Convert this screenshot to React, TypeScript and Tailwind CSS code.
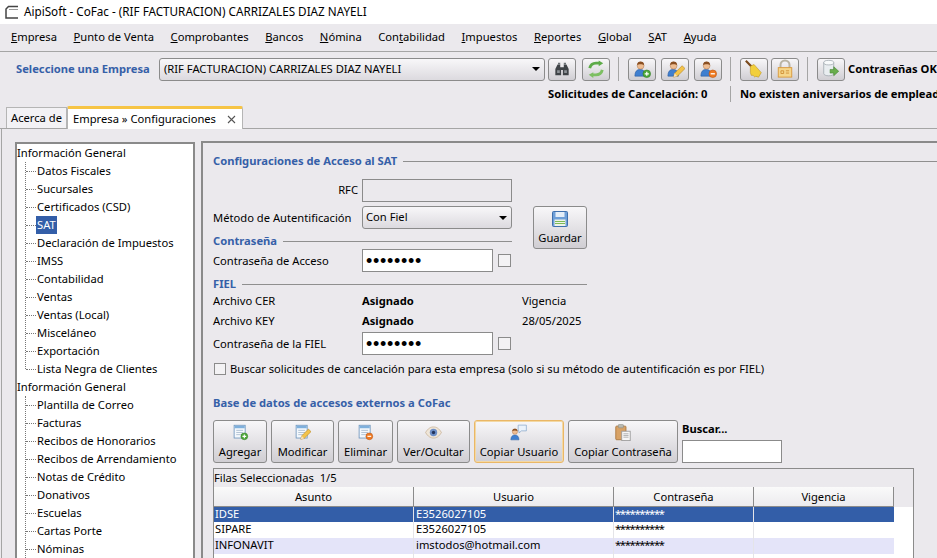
import type { ReactNode } from "react";

const menus: [string, number][] = [
	["Empresa", 0],
	["Punto de Venta", 0],
	["Comprobantes", 0],
	["Bancos", 0],
	["Nómina", 0],
	["Contabilidad", 3],
	["Impuestos", 0],
	["Reportes", 0],
	["Global", 0],
	["SAT", 0],
	["Ayuda", 0],
];

const treeA = ["Datos Fiscales", "Sucursales", "Certificados (CSD)", "SAT", "Declaración de Impuestos", "IMSS", "Contabilidad", "Ventas", "Ventas (Local)", "Misceláneo", "Exportación", "Lista Negra de Clientes"];
const treeB = ["Plantilla de Correo", "Facturas", "Recibos de Honorarios", "Recibos de Arrendamiento", "Notas de Crédito", "Donativos", "Escuelas", "Cartas Porte", "Nóminas"];

const rows = [
	{ asunto: "IDSE", usuario: "E3526027105", h: "h-[15px]", bg: "bg-[#335ea8] text-white" },
	{ asunto: "SIPARE", usuario: "E3526027105", h: "h-[16px]", bg: "bg-white text-black" },
	{ asunto: "INFONAVIT", usuario: "imstodos@hotmail.com", h: "h-[16px]", bg: "bg-[#e4e4f9] text-black" },
];

// small toolbar icons, drawn by hand
function Person({ children }: { children?: ReactNode }) {
	return (
		<svg width="19" height="19" viewBox="0 0 20 20">
			<path d="M2 17c0-5 2-7 5.500-7s5.500 2 5.500 7z" fill="#3f7fd0" stroke="#2a5a9c" strokeWidth=".6" />
			<circle cx="8" cy="6" r="3.600" fill="#eebd92" stroke="#a8704a" strokeWidth=".5" />
			<path d="M4.300 5.500C4.300 2.500 6 1.500 8 1.500s3.700 1 3.700 4C10 4 6 4 4.300 5.500z" fill="#8a4f22" />
			{children}
		</svg>
	);
}

const Plus = () => (
	<g>
		<circle cx="14.500" cy="14.500" r="4" fill="#4ea83a" stroke="#2f7a22" strokeWidth=".6" />
		<path d="M12.300 14.500h4.400M14.500 12.300v4.400" stroke="#fff" strokeWidth="1.300" />
	</g>
);

const Minus = () => (
	<g>
		<circle cx="14.500" cy="14.500" r="4" fill="#ee7a22" stroke="#b8500f" strokeWidth=".6" />
		<path d="M12.300 14.500h4.400" stroke="#fff" strokeWidth="1.400" />
	</g>
);

const Pencil = () => (
	<g>
		<path d="M8 18l1-4 8-8 3 3-8 8z" fill="#f3c34a" stroke="#b07f1c" strokeWidth=".6" />
		<path d="M8 18l1-4 3 3z" fill="#f5e0c0" />
	</g>
);

function Sheet({ children }: { children?: ReactNode }) {
	return (
		<svg width="17" height="17" viewBox="0 0 20 20">
			<rect x="2.500" y="1.500" width="13" height="15" fill="#f4f8fc" stroke="#6f96bd" />
			<path d="M3 2h12v3H3z" fill="#7fb0dc" />
			<path d="M5 7.500h8M5 10h8M5 12.500h8" stroke="#a9bccf" />
			{children}
		</svg>
	);
}

const Binoculars = () => (
	<svg width="16" height="16" viewBox="0 0 18 18">
		<path d="M1.500 9l2.500-5h3v3h4V4h3l2.500 5v7h-6.500V10H8v6H1.500z" fill="#3f4347" />
		<path d="M4.500 2h2.500v2H4.500zM11 2h2.500v2H11z" fill="#6d7276" />
		<path d="M3.500 10.500h3v3h-3zM11.500 10.500h3v3h-3z" fill="#8d9297" />
	</svg>
);

const Refresh = () => (
	<svg width="20" height="18" viewBox="0 0 22 20" fill="none">
		<path d="M4 9c1-4 4-5.500 7-5.500h4" stroke="#5dab48" strokeWidth="3.200" />
		<path d="M14 .5l5 3-5 3.500z" fill="#5dab48" />
		<path d="M18 11c-1 4-4 5.500-7 5.500H7" stroke="#7dbf62" strokeWidth="3.200" />
		<path d="M8 13.500l-5 3 5 3.500z" fill="#7dbf62" />
	</svg>
);

const Broom = () => (
	<svg width="20" height="20" viewBox="0 0 22 22">
		<path d="M2 2l7 7" stroke="#7a4a1c" strokeWidth="2.400" />
		<path d="M7 8l4-2 8 9-3 5-3-1-1 1-2-2-2 0-1-3z" fill="#f2cf3c" stroke="#b98f1c" strokeWidth=".6" />
	</svg>
);

const Lock = () => (
	<svg width="18" height="20" viewBox="0 0 20 22" fill="none">
		<path d="M5 10V6.500a5 5 0 0 1 10 0V10" stroke="#b9b4a4" strokeWidth="2.200" />
		<rect x="2.500" y="9.500" width="15" height="10.500" fill="#f6d68a" stroke="#d8973a" />
		<path d="M5.500 13h3v3h-3zM11 13h3.500M11 15.500h3.500" stroke="#cf8f34" />
	</svg>
);

const DbArrow = () => (
	<svg width="20" height="20" viewBox="0 0 22 22">
		<path d="M3 4v12c0 1.500 2.500 2.500 5.500 2.500s5.500-1 5.500-2.500V4z" fill="#e9edf0" stroke="#9aa3aa" strokeWidth=".8" />
		<ellipse cx="8.500" cy="4" rx="5.500" ry="2.500" fill="#f8fafb" stroke="#9aa3aa" strokeWidth=".8" />
		<path d="M10 11.500h4V8.500l5.500 5-5.500 5v-3h-4z" fill="#68ad4c" stroke="#3f7f2c" strokeWidth=".6" />
	</svg>
);

const Floppy = () => (
	<svg width="16" height="16" viewBox="0 0 16 16">
		<rect x=".5" y=".5" width="15" height="15" rx="1" fill="#6e9fd8" stroke="#3f70ad" />
		<rect x="3.500" y="1" width="9" height="5" fill="#e4eef8" />
		<rect x="2.500" y="8.500" width="11" height="6.500" fill="#eef3e8" />
		<path d="M3 10.500h10M3 12.500h10" stroke="#7dbb55" />
	</svg>
);

const Eye = () => (
	<svg width="17" height="13" viewBox="0 0 18 14">
		<path d="M.5 7C3 2.500 6 1 9 1s6 1.500 8.500 6C15 11.500 12 13 9 13S3 11.500.5 7z" fill="#efe6d8" stroke="#c2a988" strokeWidth=".7" />
		<circle cx="9" cy="7" r="4" fill="#6d8fc8" />
		<circle cx="9" cy="7" r="1.800" fill="#23345c" />
	</svg>
);

const PersonTalk = () => (
	<svg width="18" height="17" viewBox="0 0 22 20">
		<path d="M1 19c0-4 2-6 5-6s5 2 5 6z" fill="#3f7fd0" stroke="#2a5a9c" strokeWidth=".6" />
		<circle cx="6" cy="9" r="3.200" fill="#eebd92" stroke="#a8704a" strokeWidth=".5" />
		<path d="M2.800 8.500c0-2.500 1.500-3 3.200-3s3.200.5 3.200 3c-1.500-1.200-5-1.200-6.400 0z" fill="#8a4f22" />
		<path d="M10 1h10v7h-6l-3 2.500V8h-1z" fill="#eaf2fb" stroke="#7e9fc4" strokeWidth=".8" />
	</svg>
);

const Clipboard = () => (
	<svg width="16" height="17" viewBox="0 0 18 20">
		<rect x=".5" y="2.500" width="12" height="16" rx="1" fill="#d8a266" stroke="#a9743a" />
		<rect x="3.500" y=".5" width="6" height="4" rx="1" fill="#b9b9b0" stroke="#85857c" strokeWidth=".6" />
		<rect x="7.500" y="8.500" width="10" height="11" fill="#f6f6f6" stroke="#9a9a9a" />
		<path d="M9.500 11.500h6M9.500 13.500h6M9.500 15.500h6" stroke="#a9a9a9" />
	</svg>
);

function ToolButton({ className, children }: { className: string; children: ReactNode }) {
	return (
		<button type="button" className={`h-[23px] w-[28px] shrink-0 flex items-center justify-center rounded-[3px] border border-[#8b8b8b] bg-linear-to-b from-[#f8f7f9] to-[#d0ced3] ${className}`}>
			{children}
		</button>
	);
}

function ActionButton({ icon, label, width, active }: { icon: ReactNode; label: string; width: string; active?: boolean }) {
	return (
		<button
			type="button"
			className={`h-[43px] ${width} shrink-0 flex flex-col items-center rounded-[3px] border bg-linear-to-b from-[#f8f7f9] to-[#d0ced3] ${active ? "border-[#eab766] ring-1 ring-inset ring-[#f3d8a4]" : "border-[#8b8b8b]"}`}
		>
			<span className="h-[23px] flex items-center justify-center">{icon}</span>
			<span className="leading-[15px]">{label}</span>
		</button>
	);
}

function Sep({ className }: { className: string }) {
	return <div className={`w-px shrink-0 bg-[#a5a5a5] ${className}`} />;
}

function Heading({ children, line }: { children: ReactNode; line: string }) {
	return (
		<div className="flex items-center gap-[6px] font-bold text-[#3660a8] h-[16px]">
			<span className="whitespace-nowrap">{children}</span>
			<div className={`h-px bg-[#8f8f8f] ${line}`} />
		</div>
	);
}

function Password() {
	return (
		<div className="flex items-center gap-[5px]">
			<div className="w-[131px] h-[23px] border border-[#8b8b8b] bg-white flex items-center pl-[3px] text-black overflow-hidden">
				<span className="font-['Liberation_Sans',sans-serif] text-[18px] tracking-[0.7px] leading-none">••••••••</span>
			</div>
			<div className="w-[13px] h-[13px] border border-[#8b8b8b] bg-[#f3f2f4]" />
		</div>
	);
}

function TreeGroup({ items, tail }: { items: string[]; tail?: boolean }) {
	return (
		<>
			<div className="h-[18px] flex items-center leading-[18px] shrink-0">Información General</div>
			<div className={`ml-[8px] flex flex-col border-l border-dotted border-[#777] ${tail ? "" : "h-[207px] mb-[9px]"}`}>
				{items.map((t) => (
					<div key={t} className="h-[18px] flex items-center shrink-0">
						<div className="w-[10px] border-t border-dotted border-[#777]" />
						<span className={`px-px leading-[18px] ${t === "SAT" ? "bg-[#335ea8] text-white" : ""}`}>{t}</span>
					</div>
				))}
			</div>
		</>
	);
}

export default function App() {
	return (
		<div className="w-[937px] h-[558px] overflow-hidden flex flex-col bg-[#ebe9ed] text-[11.2px] text-black font-['Noto_Sans',sans-serif]">
			{/* Title bar */}
			<div className="h-[24px] bg-white flex items-center pl-[5px] gap-[5px] shrink-0 text-[11.7px]">
				<svg width="14" height="14" viewBox="0 0 14 14" fill="none">
					<path d="M13 1.500H3.500L1 4v9h12" stroke="#444" strokeWidth="1.500" />
					<path d="M4 4.500h9" stroke="#999" />
				</svg>
				<span>AipiSoft - CoFac - (RIF FACTURACION) CARRIZALES DIAZ NAYELI</span>
			</div>

			{/* Menu */}
			<div className="h-[28px] shrink-0 flex items-center pl-[11px] border-b border-[#a5a5a5]">
				{menus.map(([m, u]) => (
					<span key={m} className="mr-[16.6px] whitespace-nowrap">
						{m.slice(0, u)}
						<span className="underline">{m[u]}</span>
						{m.slice(u + 1)}
					</span>
				))}
			</div>

			{/* Toolbar */}
			<div className="h-[33px] shrink-0 flex items-center pl-[16px] pt-[1px]">
				<span className="w-[143px] shrink-0 font-bold text-[#3660a8] whitespace-nowrap">Seleccione una Empresa</span>
				<div className="w-[386px] shrink-0 h-[23px] rounded-[3px] border border-[#8b8b8b] bg-linear-to-b from-[#f8f7f9] to-[#dcdadf] flex items-center justify-between pl-[4px] pr-[4px]">
					<span>(RIF FACTURACION) CARRIZALES DIAZ NAYELI</span>
					<span className="w-0 h-0 border-x-[4px] border-x-transparent border-t-[4px] border-t-black" />
				</div>
				<ToolButton className="ml-[3px]"><Binoculars /></ToolButton>
				<ToolButton className="ml-[6px]"><Refresh /></ToolButton>
				<Sep className="h-[24px] ml-[8px]" />
				<ToolButton className="ml-[9px]"><Person><Plus /></Person></ToolButton>
				<ToolButton className="ml-[5px]"><Person><Pencil /></Person></ToolButton>
				<ToolButton className="ml-[5px]"><Person><Minus /></Person></ToolButton>
				<Sep className="h-[24px] ml-[8px]" />
				<ToolButton className="ml-[9px]"><Broom /></ToolButton>
				<ToolButton className="ml-[3px]"><Lock /></ToolButton>
				<Sep className="h-[24px] ml-[8px]" />
				<ToolButton className="ml-[9px]"><DbArrow /></ToolButton>
				<span className="ml-[3px] font-bold whitespace-nowrap">Contraseñas OK</span>
			</div>

			{/* Notices */}
			<div className="h-[18px] shrink-0 flex items-center pl-[548px] font-bold whitespace-nowrap overflow-hidden">
				<span className="w-[182px] shrink-0">Solicitudes de Cancelación: 0</span>
				<Sep className="h-[16px]" />
				<span className="ml-[9px]">No existen aniversarios de empleados</span>
			</div>

			{/* Tabs */}
			<div className="h-[27px] shrink-0 flex items-end pl-[6px] border-b border-[#a5a5a5] -mt-px">
				<div className="h-[21px] w-[61px] border border-b-0 border-[#b5b5b5] bg-[#f3f2f5] flex items-center justify-center whitespace-nowrap">Acerca de</div>
				<div className="h-[23px] w-[176px] -mb-px bg-white border-x border-[#b5b5b5] border-t-[3px] border-t-[#f6c445] rounded-t-[2px] flex items-center pl-[5px] whitespace-nowrap">
					<span>Empresa » Configuraciones</span>
					<svg className="ml-auto mr-[6px]" width="9" height="9" viewBox="0 0 9 9" stroke="#555" strokeWidth="1.100">
						<path d="M1 1l7 7M8 1l-7 7" />
					</svg>
				</div>
			</div>

			{/* Content */}
			<div className="flex-1 min-h-0 flex bg-[#ebe9ed] pl-[14px] pt-[12px] border-l border-[#a5a5a5] ml-px">
				{/* Tree */}
				<div className="w-[180px] mt-px -ml-px shrink-0 border-2 border-b-0 border-[#8a8a8a] bg-white flex flex-col overflow-hidden">
					<TreeGroup items={treeA} />
					<TreeGroup items={treeB} tail />
				</div>

				{/* Form */}
				<div className="ml-[6px] flex-1 min-w-0 border-l-2 border-t-2 border-[#8a8a8a] pl-[10px] pt-[10px] flex flex-col">
					<Heading line="flex-1">Configuraciones de Acceso al SAT</Heading>

					<div className="flex mt-[10px]">
						<div className="w-[299px] flex flex-col">
							<div className="flex items-center h-[23px]">
								<span className="w-[145px] text-right">RFC</span>
								<div className="ml-[4px] w-[150px] h-[23px] border border-[#8b8b8b] bg-[#ebe9ed]" />
							</div>
							<div className="flex items-center h-[23px] mt-[4px]">
								<span className="w-[149px] whitespace-nowrap pt-px">Método de Autentificación</span>
								<div className="w-[150px] h-[23px] rounded-[3px] border border-[#8b8b8b] bg-linear-to-b from-[#f8f7f9] to-[#dcdadf] flex items-center justify-between pl-[3px] pr-[4px]">
									<span>Con Fiel</span>
									<span className="w-0 h-0 border-x-[4px] border-x-transparent border-t-[4px] border-t-black" />
								</div>
							</div>
						</div>
						<button type="button" className="ml-[21px] mt-[27px] w-[54px] h-[43px] flex flex-col items-center rounded-[3px] border border-[#8b8b8b] bg-linear-to-b from-[#f8f7f9] to-[#d0ced3]">
							<span className="h-[23px] flex items-center justify-center"><Floppy /></span>
							<span className="leading-[15px]">Guardar</span>
						</button>
					</div>

					<div className="-mt-[16px] w-[299px]">
						<Heading line="flex-1">Contraseña</Heading>
					</div>
					<div className="flex items-center h-[23px]">
						<span className="w-[149px] pt-[2px]">Contraseña de Acceso</span>
						<Password />
					</div>

					<div className="w-[374px] mt-[4px]">
						<Heading line="flex-1">FIEL</Heading>
					</div>
					<div className="flex items-center h-[20px] -mt-px">
						<span className="w-[149px]">Archivo CER</span>
						<span className="w-[160px] font-bold">Asignado</span>
						<span>Vigencia</span>
					</div>
					<div className="flex items-center h-[20px]">
						<span className="w-[149px]">Archivo KEY</span>
						<span className="w-[160px] font-bold">Asignado</span>
						<span>28/05/2025</span>
					</div>
					<div className="flex items-center h-[23px] mt-[1px]">
						<span className="w-[149px] pt-[2px]">Contraseña de la FIEL</span>
						<Password />
					</div>
					<div className="flex items-center h-[16px] mt-[6px] gap-[4px] whitespace-nowrap">
						<div className="w-[12px] h-[12px] ml-px border border-[#8b8b8b] bg-[#f3f2f4]" />
						<span>Buscar solicitudes de cancelación para esta empresa (solo si su método de autentificación es por FIEL)</span>
					</div>

					<div className="mt-[18px] font-bold text-[#3660a8] h-[16px] leading-[16px]">Base de datos de accesos externos a CoFac</div>

					<div className="flex items-start gap-[4px] mt-[9px] whitespace-nowrap">
						<ActionButton width="w-[54px]" label="Agregar" icon={<Sheet><Plus /></Sheet>} />
						<ActionButton width="w-[63px]" label="Modificar" icon={<Sheet><Pencil /></Sheet>} />
						<ActionButton width="w-[55px]" label="Eliminar" icon={<Sheet><Minus /></Sheet>} />
						<ActionButton width="w-[73px]" label="Ver/Ocultar" icon={<Eye />} />
						<ActionButton width="w-[90px]" label="Copiar Usuario" icon={<PersonTalk />} active />
						<ActionButton width="w-[110px]" label="Copiar Contraseña" icon={<Clipboard />} />
						<div className="flex flex-col">
							<span className="font-bold leading-[18px]">Buscar...</span>
							<div className="mt-[2px] w-[100px] h-[23px] border border-[#8b8b8b] bg-white" />
						</div>
					</div>

					{/* Accesses table */}
					<div className="mt-[5px] w-[701px] flex-1 min-h-0 border border-b-0 border-[#8b8b8b] flex flex-col">
						<div className="h-[18px] flex items-center shrink-0 whitespace-pre">Filas Seleccionadas  1/5</div>
						<div className="flex h-[20px] w-[680px] shrink-0 border-b border-[#8b8b8b] bg-linear-to-b from-[#fafafa] to-[#ecebee]">
							<div className="w-[200px] border-r border-[#8b8b8b] text-center leading-[19px]">Asunto</div>
							<div className="w-[200px] border-r border-[#8b8b8b] text-center leading-[19px]">Usuario</div>
							<div className="w-[140px] border-r border-[#8b8b8b] text-center leading-[19px]">Contraseña</div>
							<div className="w-[140px] border-r border-[#8b8b8b] text-center leading-[19px]">Vigencia</div>
						</div>
						<div className="flex-1 min-h-0 bg-white overflow-hidden">
							{rows.map((r) => (
								<div key={r.asunto} className={`flex w-[680px] ${r.h} ${r.bg} leading-[14px]`}>
									<div className="w-[200px] pl-px border-r border-[#e4e4e8]">{r.asunto}</div>
									<div className="w-[200px] pl-[2px] border-r border-[#e4e4e8]">{r.usuario}</div>
									<div className="w-[140px] pl-px border-r border-[#e4e4e8] tracking-[-1.3px]">**********</div>
									<div className="w-[140px]" />
								</div>
							))}
							<div className="flex w-[680px] h-[6px]">
								<div className="w-[200px] border-r border-[#e4e4e8]" />
								<div className="w-[200px] border-r border-[#e4e4e8]" />
								<div className="w-[140px] border-r border-[#e4e4e8]" />
							</div>
						</div>
					</div>
				</div>
			</div>
		</div>
	);
}
